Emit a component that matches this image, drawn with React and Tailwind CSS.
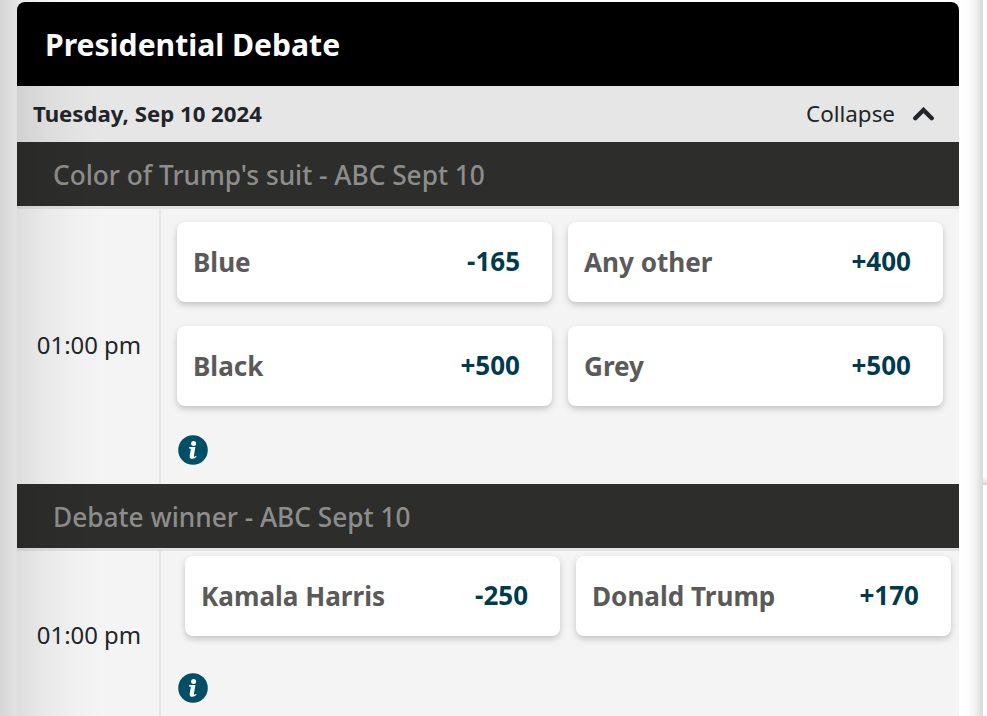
const markets = [
  {
    title: "Color of Trump's suit - ABC Sept 10",
    time: "01:00 pm",
    outcomes: [
      { name: "Blue", odds: "-165" },
      { name: "Any other", odds: "+400" },
      { name: "Black", odds: "+500" },
      { name: "Grey", odds: "+500" },
    ],
    height: "h-[275px]",
    timePadding: "pb-1",
    padding: "pl-4 pr-4 pt-[13px]",
    info: "mt-[29px] ml-px",
  },
  {
    title: "Debate winner - ABC Sept 10",
    time: "01:00 pm",
    outcomes: [
      { name: "Kamala Harris", odds: "-250" },
      { name: "Donald Trump", odds: "+170" },
    ],
    height: "h-[169px]",
    timePadding: "pb-0.5",
    padding: "pl-6 pr-2 pt-[5px]",
    info: "mt-[37px] -ml-[7px]",
  },
];

function InfoIcon({ className }) {
  return (
    <svg className={className} width="30" height="30" viewBox="0 0 30 30">
      <circle cx="15" cy="15" r="14.8" fill="#014f66" />
      <circle cx="15.6" cy="8.6" r="2.5" fill="#fff" />
      <path
        d="M11.2 12.1h6.2l-1.5 8.6c-.2 1 .4 1.1 1 .8l1.1-.6.6.9c-1.3 1.3-2.7 2-4.3 2-2.1 0-2.9-1.2-2.6-3.1l1.1-6.2c.1-.6-.1-.9-.7-.9h-1.1z"
        fill="#fff"
      />
    </svg>
  );
}

function Outcome({ name, odds }) {
  return (
    <button className="flex h-20 items-center justify-between rounded-lg bg-white pr-8 pl-4 text-[26.1px] font-bold shadow-[0_3px_6px_rgba(0,0,0,0.2)]">
      <span className="pt-0.5 text-[#5a5a5a]">{name}</span>
      <span className="text-[26px] pb-px text-[#003a4d]">{odds}</span>
    </button>
  );
}

function Market({ market }) {
  return (
    <section>
      <h2 className="flex h-16 items-center bg-[#2d2d2b] pt-[3px] pl-9 text-[26.25px] font-medium text-[#8d8d8b]">
        {market.title}
      </h2>
      <div className={`flex border-t-[3px] border-[#e2e2e2] bg-[#f4f4f4] ${market.height} box-content`}>
        <div
          className={`flex w-36 shrink-0 items-center justify-center border-r-2 border-[#e6e6e6] pl-0.5 text-[23.9px] text-[#212529] ${market.timePadding}`}
        >
          {market.time}
        </div>
        <div className={`grow ${market.padding}`}>
          <div className="grid grid-cols-2 gap-x-4 gap-y-6">
            {market.outcomes.map((outcome) => (
              <Outcome key={outcome.name} {...outcome} />
            ))}
          </div>
          <InfoIcon className={market.info} />
        </div>
      </div>
    </section>
  );
}

export default function App() {
  return (
    <div className="relative flex h-[716px] w-[987px] overflow-hidden bg-white font-['Noto_Sans',sans-serif]">
      <div className="w-[17px] shrink-0 bg-[#f9f9f9]"></div>
      <main className="w-[942px] shrink-0 pt-0.5">
        {/* header */}
        <h1 className="flex h-21 items-center rounded-t-lg bg-black pt-0.5 pl-7 text-[30.1px] font-bold text-white">
          Presidential Debate
        </h1>
        <div className="flex h-14 items-center bg-[#e6e6e6] pr-[25px] pl-4 text-[22.4px] text-[#212529]">
          <span className="grow pb-px text-[22.2px] font-bold">Tuesday, Sep 10 2024</span>
          <span className="pb-px">Collapse</span>
          <svg className="ml-[18px]" width="21" height="14" viewBox="0 0 21 14" fill="none">
            <path d="M2.3 11.2L10.5 3L18.7 11.2" stroke="#212529" strokeWidth="4.4" strokeLinecap="round" />
          </svg>
        </div>

        {/* markets */}
        {markets.map((market) => (
          <Market key={market.title} market={market} />
        ))}
      </main>
      {/* page edge shadows */}
      <div className="w-6 shrink-0 bg-[linear-gradient(to_right,#fff_0%,#fdfdfd_40%,#f0f0f0_70%,#d9d9d9_100%)]"></div>
      <div className="flex h-[485px] w-1 shrink-0 items-end">
        <div className="h-2 w-full bg-linear-to-t from-[#d4d4d4] to-white"></div>
      </div>
      <div className="pointer-events-none absolute inset-y-0 left-0 w-[108px] bg-[linear-gradient(to_right,rgba(0,0,0,0.14)_0%,rgba(0,0,0,0.09)_17%,rgba(0,0,0,0.04)_45%,rgba(0,0,0,0.01)_75%,transparent_100%)]"></div>
    </div>
  );
}
